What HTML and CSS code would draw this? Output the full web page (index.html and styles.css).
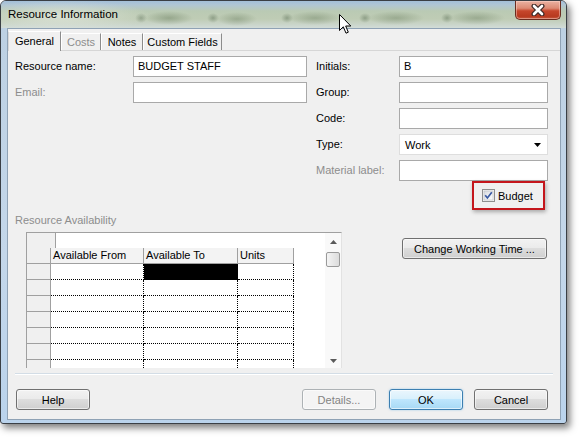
FILE: index.html
```html
<!DOCTYPE html>
<html>
<head>
<meta charset="utf-8">
<link rel="stylesheet" href="styles.css">
</head>
<body>
<div class="window">
  <div class="titlebar">
    <span class="title">Resource Information</span>
    <div class="close">
      <svg width="16" height="12" viewBox="0 0 16 12">
        <path d="M4 2 L12 10 M12 2 L4 10" stroke="#3f2a27" stroke-width="5" stroke-linecap="round"/>
        <path d="M4 2 L12 10 M12 2 L4 10" stroke="#ffffff" stroke-width="2.6" stroke-linecap="round"/>
      </svg>
    </div>
  </div>
  <div class="client">
    <div class="tabs">
      <div class="tab active w-general">General</div>
      <div class="tab disabled w-costs">Costs</div>
      <div class="tab w-notes">Notes</div>
      <div class="tab w-custom">Custom Fields</div>
    </div>
    <div class="page">
      <div class="form">
        <span class="lbl">Resource name:</span><div class="input">BUDGET STAFF</div>
        <span class="lbl r">Initials:</span><div class="input">B</div>
        <span class="lbl dis">Email:</span><div class="input"></div>
        <span class="lbl r">Group:</span><div class="input"></div>
        <span></span><span></span>
        <span class="lbl r">Code:</span><div class="input"></div>
        <span></span><span></span>
        <span class="lbl r">Type:</span>
        <div class="select"><span>Work</span><svg width="7" height="4" viewBox="0 0 7 4"><path d="M0 0 H7 L3.5 4 Z" fill="#000"/></svg></div>
        <span></span><span></span>
        <span class="lbl r dis">Material label:</span><div class="input"></div>
      </div>
      <div class="budget-row">
        <div class="budget-box">
          <svg width="13" height="13" viewBox="0 0 13 13">
            <defs><linearGradient id="cbg" x1="0" y1="0" x2="1" y2="1"><stop offset="0" stop-color="#d8dbe0"/><stop offset="1" stop-color="#ffffff"/></linearGradient></defs>
            <rect x="0.5" y="0.5" width="12" height="12" fill="#f4f4f4" stroke="#8e8f8f"/>
            <rect x="2" y="2" width="9" height="9" fill="url(#cbg)" stroke="#b9bcc0" stroke-width="0.6"/>
            <path d="M3.2 6.3 L5.4 9 L9.8 3.2" fill="none" stroke="#3a5aa3" stroke-width="1.7"/>
          </svg>
          <span>Budget</span>
        </div>
      </div>
      <div class="section-label dis">Resource Availability</div>
      <div class="avail">
        <div class="sheet">
          <div class="sheet-main">
            <div class="entry-row"><div class="corner"></div></div>
            <div class="row">
              <div class="rh"></div>
              <div class="hc c1">Available From</div>
              <div class="hc c2">Available To</div>
              <div class="hc c3">Units</div>
            </div>
            <div class="row"><div class="rh"></div><div class="dc c1"></div><div class="dc c2 sel"></div><div class="dc c3"></div></div>
            <div class="row"><div class="rh"></div><div class="dc c1"></div><div class="dc c2"></div><div class="dc c3"></div></div>
            <div class="row"><div class="rh"></div><div class="dc c1"></div><div class="dc c2"></div><div class="dc c3"></div></div>
            <div class="row"><div class="rh"></div><div class="dc c1"></div><div class="dc c2"></div><div class="dc c3"></div></div>
            <div class="row"><div class="rh"></div><div class="dc c1"></div><div class="dc c2"></div><div class="dc c3"></div></div>
            <div class="row"><div class="rh"></div><div class="dc c1"></div><div class="dc c2"></div><div class="dc c3"></div></div>
            <div class="row"><div class="rh"></div><div class="dc c1"></div><div class="dc c2"></div><div class="dc c3"></div></div>
          </div>
          <div class="vscroll">
            <svg class="up" width="7" height="4" viewBox="0 0 7 4"><path d="M0 4 H7 L3.5 0 Z" fill="#5a5a5a"/></svg>
            <div class="thumb"></div>
            <svg class="down" width="7" height="4" viewBox="0 0 7 4"><path d="M0 0 H7 L3.5 4 Z" fill="#5a5a5a"/></svg>
          </div>
        </div>
        <button class="btn cwt">Change Working Time ...</button>
      </div>
    </div>
    <div class="sep"></div>
    <div class="buttons">
      <button class="btn">Help</button>
      <div class="spacer"></div>
      <button class="btn disabled">Details...</button>
      <button class="btn default ok">OK</button>
      <button class="btn cancel">Cancel</button>
    </div>
  </div>
</div>
<svg class="cursor" width="13" height="21" viewBox="0 0 13 21">
  <path d="M0.5 0.5 L0.5 16.5 L4.3 12.8 L7 19.2 L9.3 18.2 L6.7 12 L11.8 12 Z" fill="#fff" stroke="#000" stroke-width="1" stroke-linejoin="miter"/>
</svg>
</body>
</html>
```
FILE: styles.css
```css
html, body {
  margin: 0;
  padding: 0;
  background: #ffffff;
}
body {
  font-family: "Liberation Sans", Arial, sans-serif;
  font-size: 11px;
  color: #000;
  position: relative;
  width: 583px;
  height: 441px;
  overflow: hidden;
}

.window {
  width: 567px;
  height: 424px;
  box-sizing: border-box;
  border: 1px solid #3a3f45;
  border-radius: 6px 6px 3px 3px;
  background: linear-gradient(to bottom, #bcd0e2 0%, #c4d7ea 60%, #bad3ec 100%);
  box-shadow: 3px 4px 7px rgba(0, 0, 0, 0.5);
  display: flex;
  flex-direction: column;
  overflow: hidden;
}

.titlebar {
  height: 27px;
  flex: none;
  display: flex;
  align-items: flex-start;
  background:
    radial-gradient(ellipse 90px 16px at 60px 15px, rgba(226, 232, 222, 0.75), rgba(226, 232, 222, 0)),
    radial-gradient(ellipse 6px 5px at 140px 17px, rgba(95, 115, 90, 0.5), rgba(95, 115, 90, 0)),
    radial-gradient(ellipse 24px 7px at 168px 17px, rgba(110, 130, 100, 0.5), rgba(110, 130, 100, 0)),
    radial-gradient(ellipse 6px 5px at 212px 17px, rgba(95, 115, 90, 0.5), rgba(95, 115, 90, 0)),
    radial-gradient(ellipse 20px 7px at 236px 18px, rgba(110, 130, 100, 0.45), rgba(110, 130, 100, 0)),
    radial-gradient(ellipse 6px 5px at 286px 17px, rgba(95, 115, 90, 0.5), rgba(95, 115, 90, 0)),
    radial-gradient(ellipse 26px 7px at 314px 17px, rgba(110, 130, 100, 0.45), rgba(110, 130, 100, 0)),
    radial-gradient(ellipse 6px 5px at 364px 17px, rgba(95, 115, 90, 0.5), rgba(95, 115, 90, 0)),
    radial-gradient(ellipse 28px 7px at 395px 17px, rgba(110, 130, 100, 0.45), rgba(110, 130, 100, 0)),
    radial-gradient(ellipse 6px 5px at 446px 17px, rgba(95, 115, 90, 0.5), rgba(95, 115, 90, 0)),
    radial-gradient(ellipse 28px 7px at 476px 17px, rgba(110, 130, 100, 0.45), rgba(110, 130, 100, 0)),
    linear-gradient(to bottom, #a3bfd9 0px, #b0c6d4 4px, #bacab4 10px, #bfccb5 18px, #cbd6cc 24px, #d2dcd8 27px);
}
.title {
  padding-left: 7px;
  line-height: 27px;
  font-size: 11.5px;
  color: #000;
}
.close {
  margin-left: auto;
  margin-right: 5px;
  width: 46px;
  height: 19px;
  box-sizing: border-box;
  border: 1px solid #6a2c20;
  border-top: none;
  border-radius: 0 0 5px 5px;
  background: linear-gradient(to bottom, #eab2a2 0%, #dc8a74 40%, #c6462c 55%, #b8391f 85%, #c65a40 100%);
  box-shadow: inset 0 0 0 1px rgba(255, 220, 210, 0.45);
  display: flex;
  align-items: center;
  justify-content: center;
}

.client {
  flex: 1;
  margin: 0 5px 3px 6px;
  border: 1px solid #8fa2b5;
  background: #f0f0f0;
  display: flex;
  flex-direction: column;
}

.tabs {
  flex: none;
  height: 21px;
  display: flex;
  align-items: flex-end;
  border-bottom: 1px solid #d6d6d6;
}
.tab {
  height: 17px;
  box-sizing: border-box;
  border-style: solid;
  border-width: 1px 1px 0 1px;
  border-color: #ffffff #8c8c8c transparent #ffffff;
  line-height: 16px;
  text-align: center;
  white-space: nowrap;
}
.tab.active {
  height: 20px;
  margin-bottom: -1px;
  background: #f0f0f0;
  border-left-color: #d8d8d8;
  line-height: 18px;
  position: relative;
}
.tab.disabled {
  color: #8d8d8d;
}
.w-general { width: 53px; }
.w-costs { width: 40px; }
.w-notes { width: 42px; }
.w-custom { width: 79px; }

.page {
  padding: 5px 11px 0 7px;
  display: flex;
  flex-direction: column;
}

.form {
  display: grid;
  grid-template-columns: 118px 174px 92px 149px;
  grid-auto-rows: 21px;
  row-gap: 5px;
}
.lbl {
  line-height: 21px;
  white-space: nowrap;
}
.lbl.r {
  padding-left: 9px;
}
.dis {
  color: #8d8d8d;
}
.input {
  box-sizing: border-box;
  border: 1px solid #a9a9a9;
  background: #ffffff;
  padding-left: 4px;
  line-height: 19px;
}
.select {
  box-sizing: border-box;
  border: 1px solid #dedede;
  background: #ffffff;
  padding: 0 6px 0 5px;
  display: flex;
  align-items: center;
  justify-content: space-between;
}

.budget-row {
  display: flex;
  justify-content: flex-end;
  padding-right: 4px;
}
.budget-box {
  width: 73px;
  height: 29px;
  box-sizing: border-box;
  border: 2px solid #c4161c;
  display: flex;
  align-items: center;
  gap: 3px;
  padding-left: 8px;
  box-shadow: 1px 2px 4px rgba(0, 0, 0, 0.3);
}

.section-label {
  margin-top: 3px;
  line-height: 14px;
}

.avail {
  margin-top: 5px;
  display: flex;
  align-items: flex-start;
}
.sheet {
  margin-left: 11px;
  width: 316px;
  height: 136px;
  box-sizing: border-box;
  border-top: 1px solid #a0a0a0;
  border-left: 1px solid #a0a0a0;
  border-right: 1px solid #e2e2e2;
  background: #ffffff;
  display: flex;
  overflow: hidden;
}
.sheet-main {
  flex: 1;
}
.entry-row {
  height: 15px;
  display: flex;
}
.corner {
  width: 29px;
  box-sizing: border-box;
  background: #f0f0f0;
  border-right: 1px solid #a0a0a0;
}
.row {
  height: 16px;
  display: flex;
}
.rh {
  width: 24px;
  box-sizing: border-box;
  background: #f0f0f0;
  border-right: 1px solid #a0a0a0;
  border-bottom: 1px solid #a0a0a0;
}
.hc {
  box-sizing: border-box;
  background: #f3f3f3;
  border-right: 1px solid #a0a0a0;
  border-bottom: 1px solid #a0a0a0;
  padding-left: 2px;
  line-height: 15px;
  white-space: nowrap;
}
.dc {
  box-sizing: border-box;
  border-right: 1px dotted #000;
  border-bottom: 1px dotted #000;
}
.c1 { width: 93px; }
.c2 { width: 94px; }
.c3 { width: 56px; }
.sel { background: #000; }

.vscroll {
  width: 16px;
  flex: none;
  background: #f9f9f9;
  display: flex;
  flex-direction: column;
  align-items: center;
}
.vscroll .up {
  margin-top: 7px;
}
.thumb {
  margin-top: 8px;
  width: 14px;
  height: 15px;
  box-sizing: border-box;
  border: 1px solid #9a9a9a;
  border-radius: 2px;
  background: linear-gradient(to right, #f4f4f4, #dcdcdc);
}
.vscroll .down {
  margin-top: auto;
  margin-bottom: 5px;
}

.btn {
  width: 74px;
  height: 21px;
  box-sizing: border-box;
  border: 1px solid #707070;
  border-radius: 3px;
  background: linear-gradient(to bottom, #f2f2f2 0%, #ebebeb 45%, #dddddd 50%, #cfcfcf 100%);
  box-shadow: inset 0 0 0 1px rgba(255, 255, 255, 0.55);
  font-family: "Liberation Sans", Arial, sans-serif;
  font-size: 11px;
  font-weight: normal;
  color: #000;
  padding: 0;
  margin: 0;
}
.btn.cwt {
  width: 145px;
  margin-left: auto;
  margin-right: 2px;
  margin-top: 6px;
}
.btn.disabled {
  border-color: #adb2b5;
  background: #f4f4f4;
  color: #838383;
}
.btn.default {
  border-color: #3c7fb1;
  background: linear-gradient(to bottom, #eaf6fd 0%, #d9f0fc 45%, #bee6fd 50%, #a7d9f5 100%);
  box-shadow: inset 0 0 0 1px rgba(255, 255, 255, 0.6), 0 0 2px rgba(60, 160, 230, 0.5);
}
.btn.ok {
  margin-left: 13px;
}
.btn.cancel {
  margin-left: 11px;
}

.sep {
  margin: 5px 7px 0 7px;
  border-top: 1px solid #d3dde6;
  border-bottom: 1px solid #ffffff;
}
.buttons {
  margin-top: 14px;
  padding: 0 12px 0 8px;
  display: flex;
}
.spacer {
  flex: 1;
}

.cursor {
  position: absolute;
  left: 339px;
  top: 14px;
}
```
